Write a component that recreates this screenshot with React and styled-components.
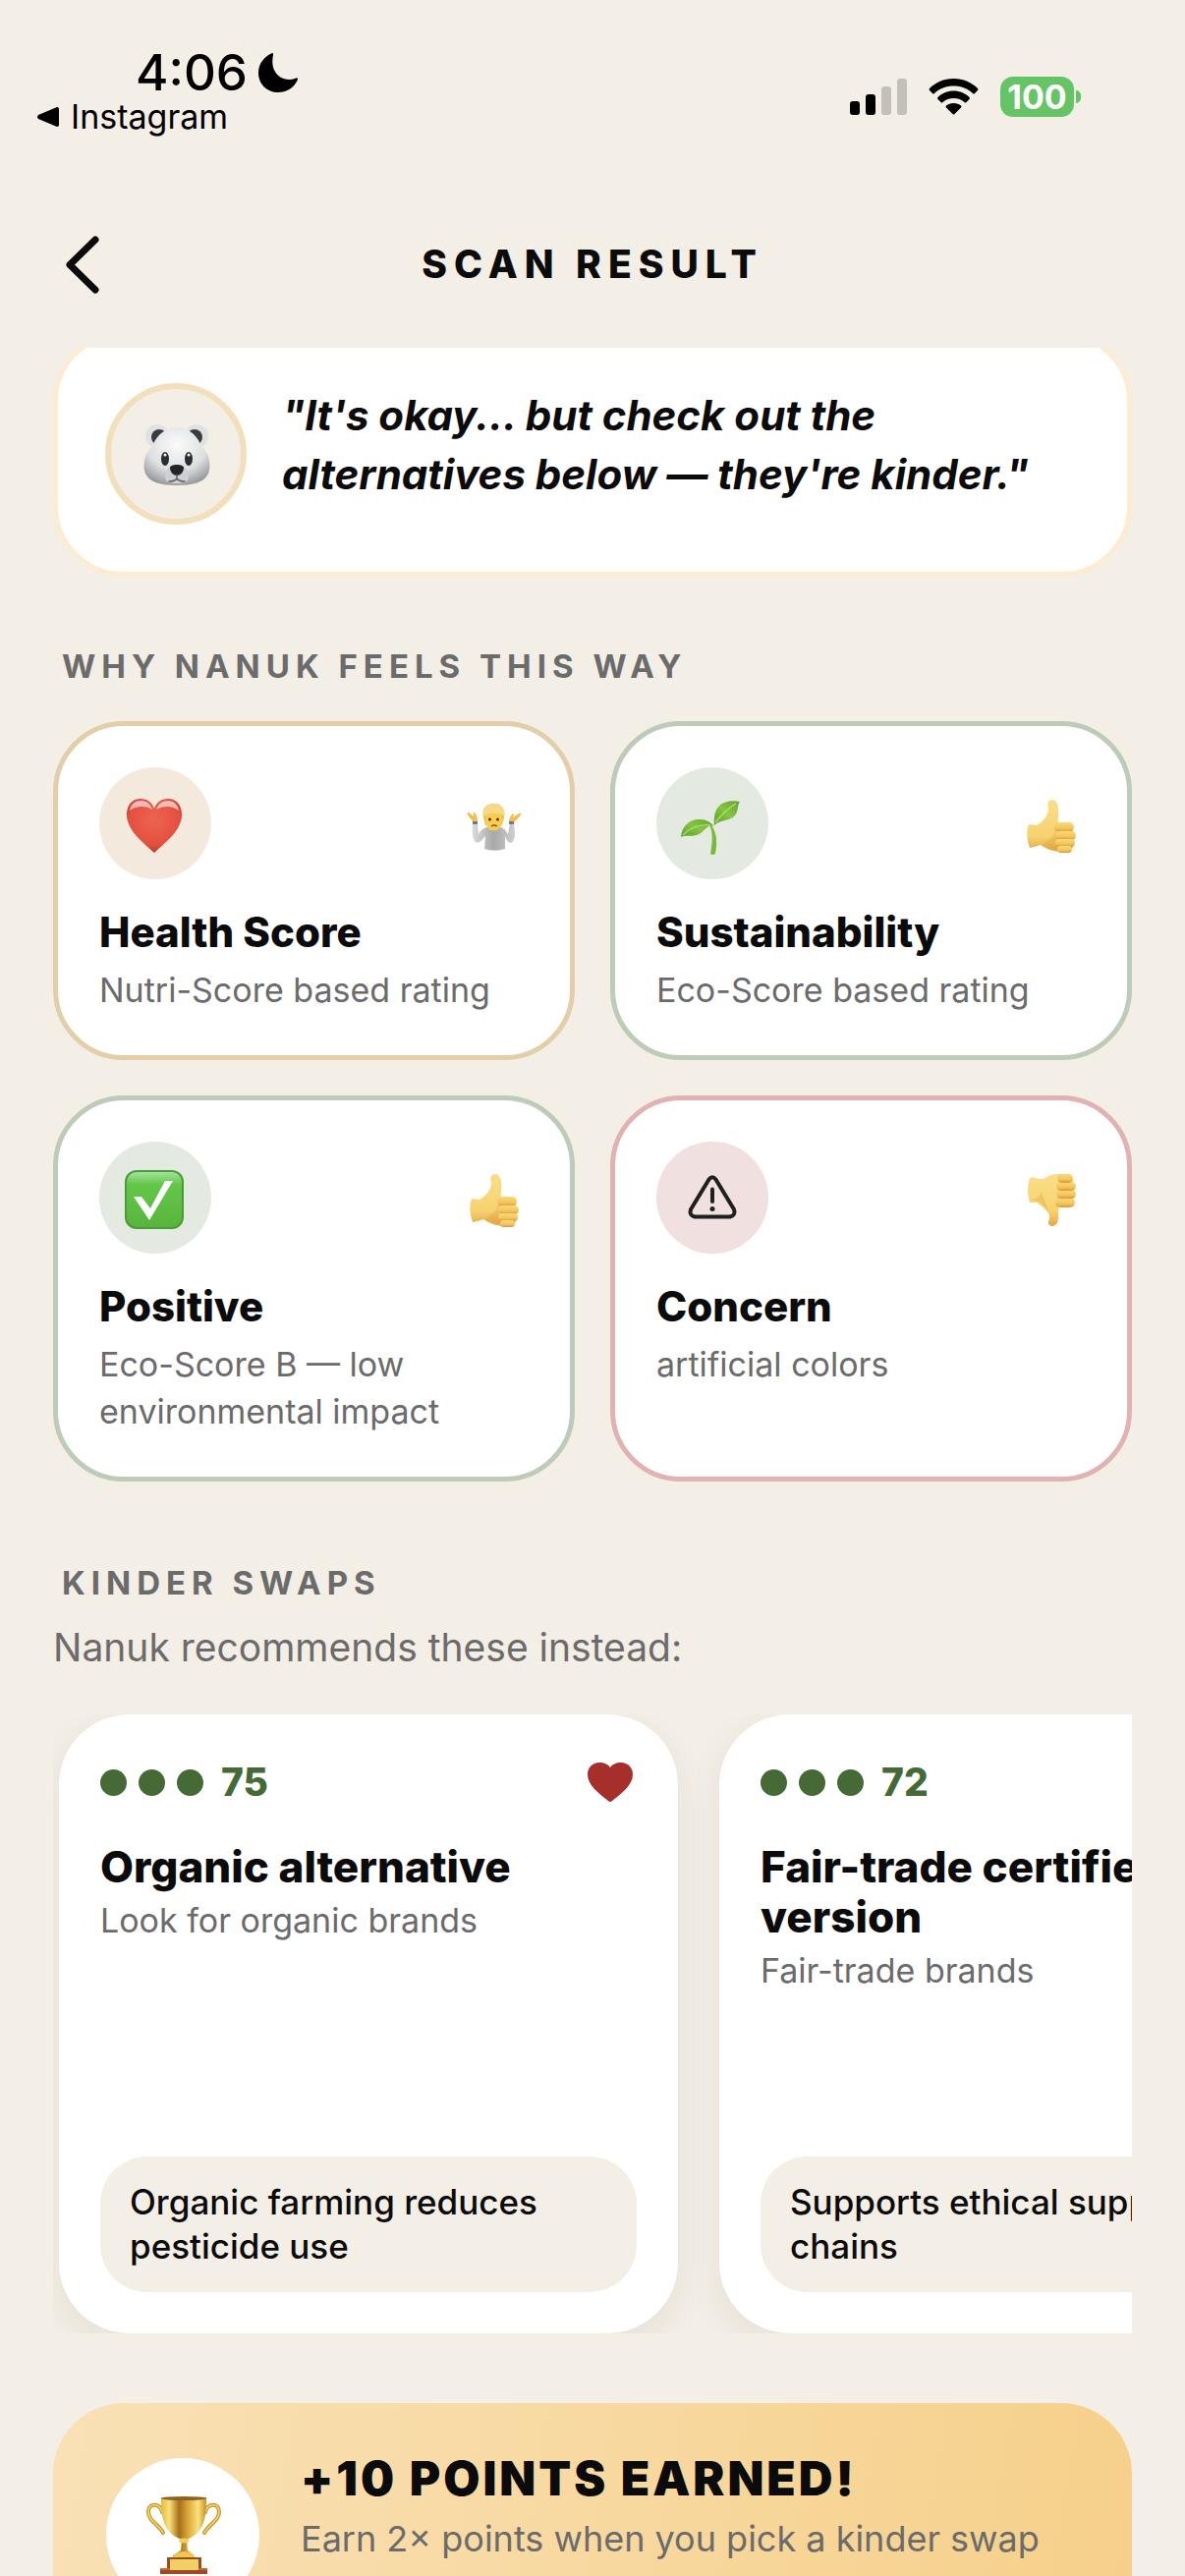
import React, { useLayoutEffect, useRef } from 'react';
import styled, { createGlobalStyle } from 'styled-components';

const GlobalStyle = createGlobalStyle`
  * {
    box-sizing: border-box;
  }

  body {
    margin: 0;
    background: #f3eee6;
    color: #0b0b0b;
    font-family: Inter, 'Liberation Sans', sans-serif;
  }

  h1, h2, h3, p {
    margin: 0;
  }

  svg {
    display: block;
    flex: none;
  }
`;

const Screen = styled.div`
  height: 100vh;
  display: flex;
  flex-direction: column;
  overflow: hidden;
`;

const StatusBar = styled.div`
  display: flex;
  justify-content: space-between;
  padding: 49px 106px 45px 38px;
  color: #000;
`;

const Clock = styled.div`
  display: flex;
  align-items: center;
  gap: 10px;
  padding-left: 100px;
  font-size: 51px;
  font-weight: 500;
  line-height: 50px;
`;

const BackToApp = styled.a`
  display: flex;
  align-items: center;
  gap: 12px;
  color: inherit;
  font-size: 34px;
  line-height: 40px;
  text-decoration: none;
`;

const StatusIcons = styled.div`
  display: flex;
  align-items: center;
  gap: 22px;
  padding-top: 8px;
`;

const Battery = styled.div`
  display: flex;
  align-items: center;
  gap: 2px;
`;

const BatteryLevel = styled.span`
  width: 75px;
  border-radius: 13px;
  background: #65c466;
  color: #fff;
  font-size: 34px;
  font-weight: 700;
  line-height: 41px;
  text-align: center;
`;

const BatteryTip = styled.span`
  width: 5px;
  height: 13px;
  border-radius: 0 5px 5px 0;
  background: #65c466;
`;

const Header = styled.header`
  display: grid;
  grid-template-columns: 60px 1fr 60px;
  align-items: center;
  height: 170px;
  flex: none;
  padding: 0 54px;
`;

const BackButton = styled.button`
  width: 60px;
  height: 60px;
  padding: 0;
  border: 0;
  background: none;
  cursor: pointer;
`;

const PageTitle = styled.h1`
  font-size: 39px;
  font-weight: 800;
  line-height: 48px;
  letter-spacing: 7px;
  text-align: center;
`;

const Content = styled.main`
  flex: 1;
  min-height: 0;
  display: flex;
  flex-direction: column;
  gap: 71px;
  padding: 0 54px 54px;
  overflow-x: hidden;
  overflow-y: auto;
  scrollbar-width: none;

  & > * {
    flex: none;
  }
`;

const MoodCard = styled.section`
  display: flex;
  align-items: center;
  gap: 36px;
  padding: 48px;
  border: 5px solid #fbecd2;
  border-radius: 72px;
  background: #fff;
`;

const Avatar = styled.div`
  display: flex;
  align-items: center;
  justify-content: center;
  width: 144px;
  height: 144px;
  flex: none;
  border: 6px solid #f2dfbb;
  border-radius: 50%;
  background: #f3eee6;
`;

const Quote = styled.p`
  padding-bottom: 18px;
  font-size: 42px;
  font-style: italic;
  font-weight: 700;
  line-height: 60px;
`;

const SectionTitle = styled.h2`
  padding-left: 9px;
  color: #6b6b6b;
  font-size: 33px;
  font-weight: 700;
  line-height: 40px;
  letter-spacing: 6px;
`;

const ReasonGrid = styled.div`
  display: grid;
  grid-template-columns: 1fr 1fr;
  gap: 36px;
  margin-top: 36px;
`;

const ReasonCard = styled.article`
  padding: 42px;
  border: 5px solid ${props => props.$border};
  border-radius: 72px;
  background: #fff;
`;

const ReasonTop = styled.div`
  display: flex;
  align-items: center;
  justify-content: space-between;
  margin-bottom: 30px;
`;

const ReasonIcon = styled.div`
  display: flex;
  align-items: center;
  justify-content: center;
  width: 114px;
  height: 114px;
  border-radius: 50%;
  background: ${props => props.$tint};
`;

const ReasonTitle = styled.h3`
  font-size: 42px;
  font-weight: 800;
  line-height: 48px;
`;

const ReasonText = styled.p`
  margin-top: 11px;
  color: #6b6b6b;
  font-size: 34px;
  line-height: 48px;
`;

const SwapSection = styled.section`
  padding-top: 12px;
`;

const SwapIntro = styled.p`
  margin-top: 22px;
  color: #6b6b6b;
  font-size: 39px;
  line-height: 48px;
`;

const SwapList = styled.div`
  display: flex;
  gap: 42px;
  margin-top: 44px;
  padding: 0 6px;
  overflow-x: auto;
  overflow-y: hidden;
  scrollbar-width: none;
`;

const SwapCard = styled.article`
  display: flex;
  flex-direction: column;
  flex: none;
  width: 630px;
  height: 630px;
  padding: 42px;
  border-radius: 72px;
  background: #fff;
  box-shadow: 0 12px 36px rgba(70, 50, 10, 0.07);
`;

const SwapTop = styled.div`
  display: flex;
  align-items: center;
  justify-content: space-between;
  height: 54px;
  margin-bottom: 34px;
`;

const Score = styled.div`
  display: flex;
  align-items: center;
  gap: 12px;
  color: #456a36;
  font-size: 39px;
  font-weight: 800;
  line-height: 48px;
`;

const Dot = styled.span`
  width: 27px;
  height: 27px;
  border-radius: 50%;
  background: #456a36;
`;

const ScoreValue = styled.span`
  padding-left: 6px;
`;

const LikeButton = styled.button`
  padding: 0;
  border: 0;
  background: none;
  cursor: pointer;
`;

const SwapTitle = styled.h3`
  font-size: 44px;
  font-weight: 800;
  line-height: 51px;
`;

const SwapBrand = styled.p`
  margin-top: 6px;
  color: #6b6b6b;
  font-size: 34px;
  line-height: 45px;
`;

const SwapReason = styled.p`
  margin-top: auto;
  padding: 24px 30px;
  border-radius: 48px;
  background: #f3eee6;
  font-size: 35px;
  font-weight: 500;
  line-height: 45px;
`;

const PointsCard = styled.section`
  display: flex;
  align-items: flex-start;
  gap: 42px;
  padding: 56px 54px;
  border-radius: 72px;
  background: linear-gradient(100deg, #f9e1b6, #f6d08a);
`;

const TrophyCircle = styled.div`
  display: flex;
  align-items: center;
  justify-content: center;
  width: 156px;
  height: 156px;
  flex: none;
  border-radius: 50%;
  background: #fff;
`;

const PointsTitle = styled.h2`
  font-size: 48px;
  font-weight: 900;
  line-height: 42px;
  letter-spacing: 3px;
`;

const PointsText = styled.p`
  margin-top: 13px;
  color: #6b6b6b;
  font-size: 36px;
  line-height: 54px;
`;

const HiddenSvg = styled.svg`
  position: absolute;
  width: 0;
  height: 0;
`;

const Gradients = () => (
  <HiddenSvg aria-hidden="true">
    <defs>
      <radialGradient id="fur" cx="50%" cy="30%" r="75%">
        <stop offset="0" stopColor="#fbfbfb" />
        <stop offset="0.6" stopColor="#dedfe0" />
        <stop offset="1" stopColor="#8d8f92" />
      </radialGradient>
      <radialGradient id="redHeart" cx="50%" cy="40%" r="65%">
        <stop offset="0" stopColor="#ec6352" />
        <stop offset="0.7" stopColor="#e5503f" />
        <stop offset="1" stopColor="#ae2d22" />
      </radialGradient>
      <linearGradient id="leaf" x1="0" y1="1" x2="1" y2="0">
        <stop offset="0" stopColor="#5f9d2a" />
        <stop offset="0.5" stopColor="#86c440" />
        <stop offset="1" stopColor="#64a32d" />
      </linearGradient>
      <linearGradient id="skin" x1="0" y1="0" x2="0" y2="1">
        <stop offset="0" stopColor="#f9de88" />
        <stop offset="0.7" stopColor="#f7d370" />
        <stop offset="1" stopColor="#e2a848" />
      </linearGradient>
      <linearGradient id="finger" x1="0" y1="0" x2="0" y2="1">
        <stop offset="0" stopColor="#f9d978" />
        <stop offset="0.6" stopColor="#f3c65c" />
        <stop offset="1" stopColor="#d9993a" />
      </linearGradient>
      <linearGradient id="check" x1="0" y1="0" x2="0" y2="1">
        <stop offset="0" stopColor="#a5e29a" />
        <stop offset="0.22" stopColor="#63c74a" />
        <stop offset="1" stopColor="#57b53b" />
      </linearGradient>
      <linearGradient id="shirt" x1="0" y1="0" x2="1" y2="0">
        <stop offset="0" stopColor="#dcdcdc" />
        <stop offset="0.5" stopColor="#a8a8a8" />
        <stop offset="1" stopColor="#cfcfcf" />
      </linearGradient>
      <linearGradient id="gold" x1="0" y1="0" x2="1" y2="0">
        <stop offset="0" stopColor="#e3b93f" />
        <stop offset="0.18" stopColor="#fbe07a" />
        <stop offset="0.4" stopColor="#a5701b" />
        <stop offset="0.6" stopColor="#dca93a" />
        <stop offset="0.82" stopColor="#fbe27c" />
        <stop offset="1" stopColor="#c08f24" />
      </linearGradient>
    </defs>
  </HiddenSvg>
);

const BearIcon = () => (
  <svg width="72" height="72" viewBox="0 0 72 72" role="img" aria-label="Nanuk">
    <circle cx="17" cy="18" r="12" fill="#dfe1e3" />
    <circle cx="57" cy="18" r="12" fill="#dfe1e3" />
    <circle cx="19" cy="19" r="8" fill="#3a3c3f" />
    <circle cx="55" cy="19" r="8" fill="#3a3c3f" />
    <path d="M37 9C27 9 18 15 13 26C11 30 8 32 6 36C3 43 3 51 5 56C9 65 21 68 37 68C53 68 65 65 69 56C71 51 71 43 68 36C66 32 63 30 61 26C56 15 47 9 37 9Z" fill="url(#fur)" />
    <path d="M37 47C29 47 25 53 25 59C25 65 30 66 37 66C44 66 49 65 49 59C49 53 45 47 37 47Z" fill="#cfd0d2" />
    <ellipse cx="25" cy="41" rx="4" ry="7" fill="#2b2c2e" />
    <ellipse cx="49" cy="41" rx="4" ry="7" fill="#2b2c2e" />
    <circle cx="25" cy="37" r="1.5" fill="#fff" />
    <circle cx="49" cy="37" r="1.5" fill="#fff" />
    <path d="M30 50C30 46 44 46 44 50C44 55 40 58 37 58C34 58 30 55 30 50Z" fill="#232426" />
    <path d="M37 57V61M29 64Q35 64 37 61Q39 64 45 64" fill="none" stroke="#606265" strokeWidth="1.5" strokeLinecap="round" />
  </svg>
);

const HeartEmoji = () => (
  <svg width="70" height="70" viewBox="0 0 70 70" aria-hidden="true">
    <path d="M34 65C22 54 6 42 6 26C6 16 12 10 20 10C27 10 32 14 34 20C36 14 41 10 48 10C56 10 62 16 62 26C62 42 46 54 34 65Z" fill="url(#redHeart)" />
    <path d="M9 22C10 15 15 12 20 12C26 12 30 15 32 21C25 17 16 17 9 22Z" fill="#fff" opacity="0.6" />
    <path d="M36 21C38 15 42 12 48 12C53 12 58 15 59 22C52 17 43 17 36 21Z" fill="#fff" opacity="0.6" />
  </svg>
);

const SproutEmoji = () => (
  <svg width="70" height="70" viewBox="0 0 70 70" aria-hidden="true">
    <path d="M34 37C40 45 40 56 38 66Q35 68 33 66C35 55 36 45 32 37Z" fill="#7cb93b" />
    <path d="M3 49C4 38 11 31 22 31C29 31 33 34 37 38C30 36 29 41 23 45C16 50 9 46 3 49Z" fill="url(#leaf)" />
    <path d="M37 37C36 25 39 17 47 14C52 12 58 12 63 13C60 17 62 22 58 27C53 33 43 31 37 37Z" fill="url(#leaf)" />
    <path d="M5 47C12 40 21 36 33 37M38 34C44 27 50 20 59 15" fill="none" stroke="#a5d866" strokeWidth="1.5" />
  </svg>
);

const CheckEmoji = () => (
  <svg width="70" height="70" viewBox="0 0 70 70" aria-hidden="true">
    <rect x="4" y="7" width="60" height="60" rx="12" fill="#4a9c38" />
    <rect x="6" y="9" width="56" height="56" rx="10" fill="url(#check)" />
    <path d="M13 34H21L30 46L45 18H53L29 58Z" fill="#fff" />
  </svg>
);

const WarningIcon = () => (
  <svg width="56" height="56" viewBox="0 0 56 56" fill="none" stroke="#1f1f1f" strokeWidth="4" strokeLinejoin="round" strokeLinecap="round" aria-hidden="true">
    <path d="M24.5 9.5Q28 5 31.5 9.5L50 40Q52 46 46 47.5H10Q4 46 6 40Z" />
    <path d="M28 19.5V32" />
    <circle cx="28" cy="39.5" r="2.5" fill="#1f1f1f" stroke="none" />
  </svg>
);

const ShrugEmoji = () => (
  <svg width="70" height="70" viewBox="0 0 70 70" aria-hidden="true">
    <path d="M13 35C12 43 13 50 15 53C18 57 22 53 26 48L25 61Q35 64 46 61L46 48C48 54 52 57 54 53C57 50 56 42 55 35H51L49 46C46 40 42 38 35 38C28 38 22 40 19 46L18 35Z" fill="url(#shirt)" />
    <path d="M14 34L9 28Q6 23 9 24L14 28Q13 22 16 25Q18 29 18 33ZM55 34L61 28Q64 24 60 25L54 29Q56 23 53 26Q50 29 50 33Z" fill="#f1bd4d" />
    <path d="M13 33H18V36H13ZM50 33H55V36H50Z" fill="#77797b" />
    <path d="M24 29C22 20 27 15 34 15C42 15 47 20 45 29L43 37H26Z" fill="#e9bd55" />
    <ellipse cx="34.5" cy="32" rx="9" ry="10.5" fill="#f8cd4e" />
    <path d="M24 29C22 20 28 15 35 15C42 15 46 20 45 28C41 24 37 25 32 25C29 25 26 26 24 29Z" fill="#f6da85" />
    <circle cx="30.5" cy="31" r="1.5" fill="#46311b" />
    <circle cx="38.5" cy="31" r="1.5" fill="#46311b" />
    <path d="M32 38Q35 36 38 38" fill="none" stroke="#8c4f22" strokeWidth="1.5" />
  </svg>
);

const ThumbEmoji = () => (
  <svg width="70" height="70" viewBox="0 0 70 70" role="img" aria-label="Good">
    <path d="M12 36Q8 47 13 60Q19 59 24 57C31 62 39 64 46 64H51Q57 62 57 58V36L42 34C41 28 44 23 41 15Q38 9 33 12Q30 14 32 20Q32 25 29 29C26 33 22 36 20 37Z" fill="url(#skin)" />
    <path d="M25 57C32 61 38 63 46 63L40 55V38C39 47 33 53 25 57Z" fill="#d99b38" opacity="0.3" />
    <rect x="38" y="34" width="20" height="10" rx="5" fill="url(#finger)" />
    <rect x="39" y="43" width="21" height="9" rx="4.5" fill="url(#finger)" />
    <rect x="39" y="51" width="20" height="8" rx="4" fill="url(#finger)" />
    <rect x="41" y="58" width="15" height="7" rx="3.5" fill="url(#finger)" />
  </svg>
);

const ThumbDownEmoji = () => (
  <svg width="70" height="70" viewBox="0 0 70 70" role="img" aria-label="Bad">
    <path d="M13 15Q9 26 13 40H20C25 43 31 48 33 53C34 58 30 60 33 63Q37 66 41 61C43 55 42 48 43 42L57 40V15L50 11H42C36 11 31 13 27 16Q20 16 16 14Z" fill="url(#skin)" />
    <path d="M12 38H20C25 41 30 46 32 51C31 42 26 35 25 28C24 34 20 37 12 38Z" fill="#d99b38" opacity="0.3" />
    <rect x="39" y="35" width="20" height="10" rx="5" fill="url(#finger)" />
    <rect x="40" y="27" width="20" height="9" rx="4.5" fill="url(#finger)" />
    <rect x="40" y="19" width="20" height="9" rx="4.5" fill="url(#finger)" />
    <rect x="41" y="11" width="16" height="9" rx="4.5" fill="url(#finger)" />
  </svg>
);

const TrophyEmoji = () => (
  <svg width="84" height="84" viewBox="0 0 84 84" aria-hidden="true">
    <path d="M21 19C19 10 8 9 7 18C6 27 18 32 22 40M65 19C67 10 78 9 79 18C80 27 68 32 64 40" fill="none" stroke="#c6922a" strokeWidth="4" strokeLinecap="round" />
    <path d="M21 19C19 10 8 9 7 18C6 27 18 32 22 40M65 19C67 10 78 9 79 18C80 27 68 32 64 40" fill="none" stroke="#f5dc6c" strokeWidth="1.5" strokeLinecap="round" />
    <path d="M20 4H66C66 25 64 40 46 47L47 58L54 63V67H32V63L40 58L41 47C22 40 20 25 20 4Z" fill="url(#gold)" />
    <ellipse cx="43" cy="5" rx="23" ry="2" fill="#8f6118" />
    <ellipse cx="43" cy="48" rx="5" ry="2.5" fill="#f0cf5d" />
    <path d="M35 61Q43 57 51 61L54 65H32Z" fill="#edc852" />
    <path d="M26 65H61V76H67V82H19V76H26Z" fill="#9c4a24" />
    <path d="M19 76H67V78H19Z" fill="#be6938" />
    <rect x="29" y="67" width="29" height="11" fill="#f0d065" />
  </svg>
);

const LikeIcon = () => (
  <svg width="54" height="54" viewBox="0 0 54 54" aria-hidden="true">
    <path d="M29 46Q27 48 25 46C15 38 4 30 4 19C4 12 9 7 16 7C21 7 25 9 27 12C29 9 33 7 38 7C45 7 50 12 50 19C50 30 39 38 29 46Z" fill="#a62f2b" />
  </svg>
);

const reasons = [
  { icon: <HeartEmoji />, verdict: <ShrugEmoji />, title: 'Health Score', text: 'Nutri-Score based rating', border: '#e3ceaa', tint: '#f4e9dd' },
  { icon: <SproutEmoji />, verdict: <ThumbEmoji />, title: 'Sustainability', text: 'Eco-Score based rating', border: '#bdcbb9', tint: '#e4e9e1' },
  { icon: <CheckEmoji />, verdict: <ThumbEmoji />, title: 'Positive', text: 'Eco-Score B — low environmental impact', border: '#bdcbb9', tint: '#e4e9e1' },
  { icon: <WarningIcon />, verdict: <ThumbDownEmoji />, title: 'Concern', text: 'artificial colors', border: '#e0b3b2', tint: '#f0e0e0' },
];

const swaps = [
  { score: 75, title: 'Organic alternative', brand: 'Look for organic brands', reason: 'Organic farming reduces pesticide use' },
  { score: 72, title: 'Fair-trade certified version', brand: 'Fair-trade brands', reason: 'Supports ethical supply chains' },
];

const App = () => {
  const contentRef = useRef(null);

  // open slightly scrolled, with the mood card tucked under the header
  useLayoutEffect(() => {
    contentRef.current.scrollTop = 17;
  }, []);

  return (
    <Screen>
      <GlobalStyle />
      <Gradients />

      <StatusBar>
        <div>
          <Clock>
            4:06
            <svg width="42" height="42" viewBox="0 0 42 42" role="img" aria-label="Focus on">
              <path d="M15 1C8 4 1 11 1 21C1 33 10 41 21 41C31 41 38 35 41 28C41 26 40 26 38 27C26 31 12 22 16 3C16 1 16 1 15 1Z" fill="#000" />
            </svg>
          </Clock>
          <BackToApp href="#instagram">
            <svg width="22" height="22" viewBox="0 0 22 22" aria-hidden="true">
              <path d="M20 1Q22 1 22 3V19Q22 21 20 21L1 13Q-1 11 1 9Z" fill="#000" />
            </svg>
            Instagram
          </BackToApp>
        </div>
        <StatusIcons>
          <svg width="58" height="38" viewBox="0 0 58 38" role="img" aria-label="Signal">
            <rect x="0" y="24" width="10" height="14" rx="3" />
            <rect x="16" y="17" width="10" height="21" rx="3" />
            <rect x="32" y="9" width="10" height="29" rx="3" fill="#c3c0b9" />
            <rect x="48" y="1" width="10" height="37" rx="3" fill="#c3c0b9" />
          </svg>
          <svg width="51" height="38" viewBox="0 0 51 38" role="img" aria-label="Wi-Fi">
            <path d="M25.5 1C15.5 1 7 5 1 11Q0 12 1 13L4 16Q5 17 6 16C11 11 18 8.5 25.5 8.5C33 8.5 40 11 45 16Q46 17 47 16L50 13Q51 12 50 11C44 5 35.5 1 25.5 1Z" />
            <path d="M25.5 13.5C19 13.5 13.5 16 9.5 20Q8.5 21 9.5 22L12.5 25Q13.5 26 14.5 25C17.5 22.5 21 21 25.5 21C30 21 33.5 22.5 36.5 25Q37.5 26 38.5 25L41.5 22Q42.5 21 41.5 20C37.5 16 32 13.5 25.5 13.5Z" />
            <path d="M25.5 26C22.5 26 20 27 18 28.5Q17 29.5 18 30.5L24.5 37Q25.5 38 26.5 37L33 30.5Q34 29.5 33 28.5C31 27 28.5 26 25.5 26Z" />
          </svg>
          <Battery>
            <BatteryLevel>100</BatteryLevel>
            <BatteryTip />
          </Battery>
        </StatusIcons>
      </StatusBar>

      <Header>
        <BackButton aria-label="Back">
          <svg width="60" height="60" viewBox="0 0 60 60" fill="none" aria-hidden="true">
            <path d="M43 5L17 30.5L43 56" stroke="#0b0b0b" strokeWidth="7" strokeLinecap="round" strokeLinejoin="round" />
          </svg>
        </BackButton>
        <PageTitle>SCAN RESULT</PageTitle>
      </Header>

      <Content ref={contentRef}>
        <MoodCard>
          <Avatar><BearIcon /></Avatar>
          <Quote>"It's okay... but check out the alternatives below — they're kinder."</Quote>
        </MoodCard>

        <section>
          <SectionTitle>WHY NANUK FEELS THIS WAY</SectionTitle>
          <ReasonGrid>
            {reasons.map(reason => (
              <ReasonCard key={reason.title} $border={reason.border}>
                <ReasonTop>
                  <ReasonIcon $tint={reason.tint}>{reason.icon}</ReasonIcon>
                  {reason.verdict}
                </ReasonTop>
                <ReasonTitle>{reason.title}</ReasonTitle>
                <ReasonText>{reason.text}</ReasonText>
              </ReasonCard>
            ))}
          </ReasonGrid>
        </section>

        <SwapSection>
          <SectionTitle>KINDER SWAPS</SectionTitle>
          <SwapIntro>Nanuk recommends these instead:</SwapIntro>
          <SwapList>
            {swaps.map(swap => (
              <SwapCard key={swap.title}>
                <SwapTop>
                  <Score>
                    <Dot />
                    <Dot />
                    <Dot />
                    <ScoreValue>{swap.score}</ScoreValue>
                  </Score>
                  <LikeButton aria-label={`Like ${swap.title}`}><LikeIcon /></LikeButton>
                </SwapTop>
                <SwapTitle>{swap.title}</SwapTitle>
                <SwapBrand>{swap.brand}</SwapBrand>
                <SwapReason>{swap.reason}</SwapReason>
              </SwapCard>
            ))}
          </SwapList>
        </SwapSection>

        <PointsCard>
          <TrophyCircle><TrophyEmoji /></TrophyCircle>
          <div>
            <PointsTitle>+10 POINTS EARNED!</PointsTitle>
            <PointsText>Earn 2× points when you pick a kinder swap alternative.</PointsText>
          </div>
        </PointsCard>
      </Content>
    </Screen>
  );
};

export default App;
